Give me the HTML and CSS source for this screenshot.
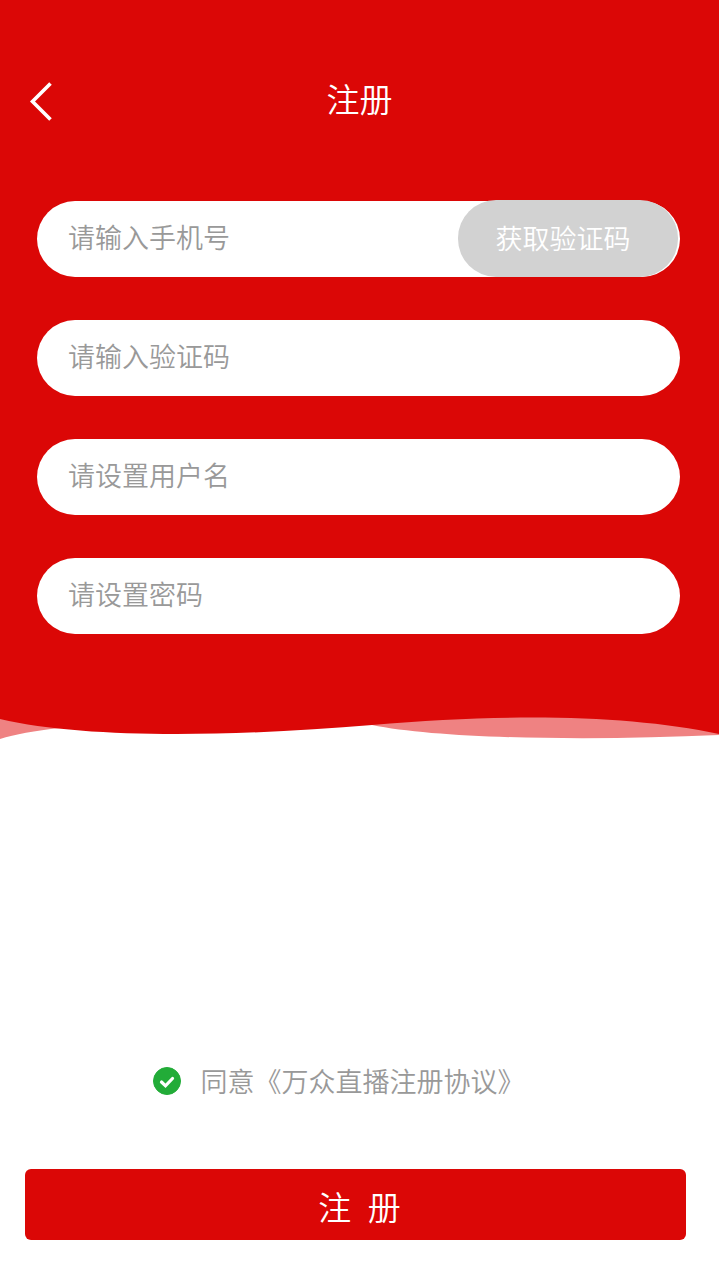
FILE: index.html
```html
<!DOCTYPE html>
<html lang="zh-CN">
<head>
  <meta charset="utf-8">
  <meta name="viewport" content="width=device-width, initial-scale=1">
  <title>注册</title>
  <link rel="stylesheet" href="styles.css">
</head>
<body>
  <form class="page">
    <div class="hero">
      <header class="topbar">
        <button class="back" type="button" aria-label="返回">
          <svg class="back-icon" viewBox="0 0 24 40" aria-hidden="true">
            <path d="M21.5 1.5 L3.5 19.5 L21.5 37.5" fill="none" stroke="#fff" stroke-width="3.6"/>
          </svg>
        </button>
        <h1 class="title">注册</h1>
      </header>
      <div class="fields">
        <div class="field">
          <input class="input" type="tel" placeholder="请输入手机号" aria-label="请输入手机号">
          <button class="code-button" type="button">获取验证码</button>
        </div>
        <div class="field">
          <input class="input" type="text" placeholder="请输入验证码" aria-label="请输入验证码">
        </div>
        <div class="field">
          <input class="input" type="text" placeholder="请设置用户名" aria-label="请设置用户名">
        </div>
        <div class="field">
          <input class="input" type="password" placeholder="请设置密码" aria-label="请设置密码">
        </div>
      </div>
    </div>
    <svg class="wave" viewBox="0 0 720 28" preserveAspectRatio="none" aria-hidden="true">
      <path class="wave-back" d="M0 0 H719 V23 C590 29 440 27 372 13 L60 16 Q22 20 0 27 Z"/>
      <path class="wave-front" d="M0 0 H719 V22 C630 3 510 1 372 13 C240 24 90 28 0 7 Z"/>
    </svg>
    <footer class="footer">
      <div class="agreement">
        <span class="check">
          <input class="check-input" type="checkbox" id="agree" checked>
          <svg class="check-mark" viewBox="0 0 28 28" aria-hidden="true">
            <path d="M8.5 15 L12.5 18.8 L19.5 11.5" fill="none" stroke="#fff" stroke-width="3.2" stroke-linecap="round"/>
          </svg>
        </span>
        <label class="agreement-text" for="agree">同意<a class="link" href="#agreement">《万众直播注册协议》</a></label>
      </div>
      <button class="submit" type="submit">注&ensp;册</button>
    </footer>
  </form>
</body>
</html>
```
FILE: styles.css
```css
* {
  box-sizing: border-box;
}

body {
  margin: 0;
  background: #fff;
  font-family: "Noto Sans CJK SC", sans-serif;
  font-weight: 350;
}

button,
input {
  margin: 0;
  padding: 0;
  border: 0;
  background: none;
  font: inherit;
}

.page {
  display: flex;
  flex-direction: column;
  min-height: 100vh;
}

.hero {
  background: #db0706;
  padding: 74px 39px 78px 37px;
  margin-right: 1px;
}

.topbar {
  display: grid;
  grid-template-columns: 24px 1fr 24px;
  align-items: center;
  height: 48px;
  margin: 0 -10px 79px -8px;
}

.back {
  display: block;
  height: 40px;
  margin-top: 7px;
}

.back-icon {
  display: block;
  width: 24px;
  height: 40px;
}

.title {
  margin: 0;
  color: #fff;
  font-size: 33px;
  font-weight: inherit;
  line-height: 48px;
  text-align: center;
}

.fields {
  display: grid;
  gap: 43px;
}

.field {
  display: flex;
  height: 76px;
  padding-right: 2px;
  border-radius: 38px;
  background: #fff;
}

.input {
  flex: 1;
  min-width: 0;
  padding: 0 0 6px 31px;
  outline: 0;
  color: #333;
  font-size: 27px;
}

.input::placeholder {
  color: #999;
  opacity: 1;
}

.code-button {
  width: 220px;
  margin-top: -1px;
  padding: 0 10px 2px 0;
  border-radius: 38px;
  background: #d2d2d2;
  color: #fff;
  font-size: 27px;
}

.wave {
  display: block;
  width: 100%;
  height: 28px;
}

.wave-back {
  fill: #ef8282;
}

.wave-front {
  fill: #db0706;
}

.footer {
  margin-top: auto;
  padding: 0 34px 40px 25px;
}

.agreement {
  display: flex;
  justify-content: center;
  align-items: center;
  gap: 20px;
  margin-bottom: 68px;
  padding-right: 34px;
}

.check {
  display: grid;
  width: 28px;
  height: 28px;
}

.check-input,
.check-mark {
  grid-area: 1 / 1;
  width: 28px;
  height: 28px;
}

.check-input {
  appearance: none;
  border: 1px solid #999;
  border-radius: 50%;
}

.check-input:checked {
  border-color: #22ac38;
  background: #22ac38;
}

.check-mark {
  pointer-events: none;
}

.agreement-text {
  color: #999;
  font-size: 27px;
  line-height: 40px;
}

.link {
  color: inherit;
  text-decoration: none;
}

.submit {
  display: block;
  width: 100%;
  height: 71px;
  padding: 2px 0 0 8px;
  border-radius: 6px;
  background: #db0706;
  color: #fff;
  font-size: 33px;
}
```
